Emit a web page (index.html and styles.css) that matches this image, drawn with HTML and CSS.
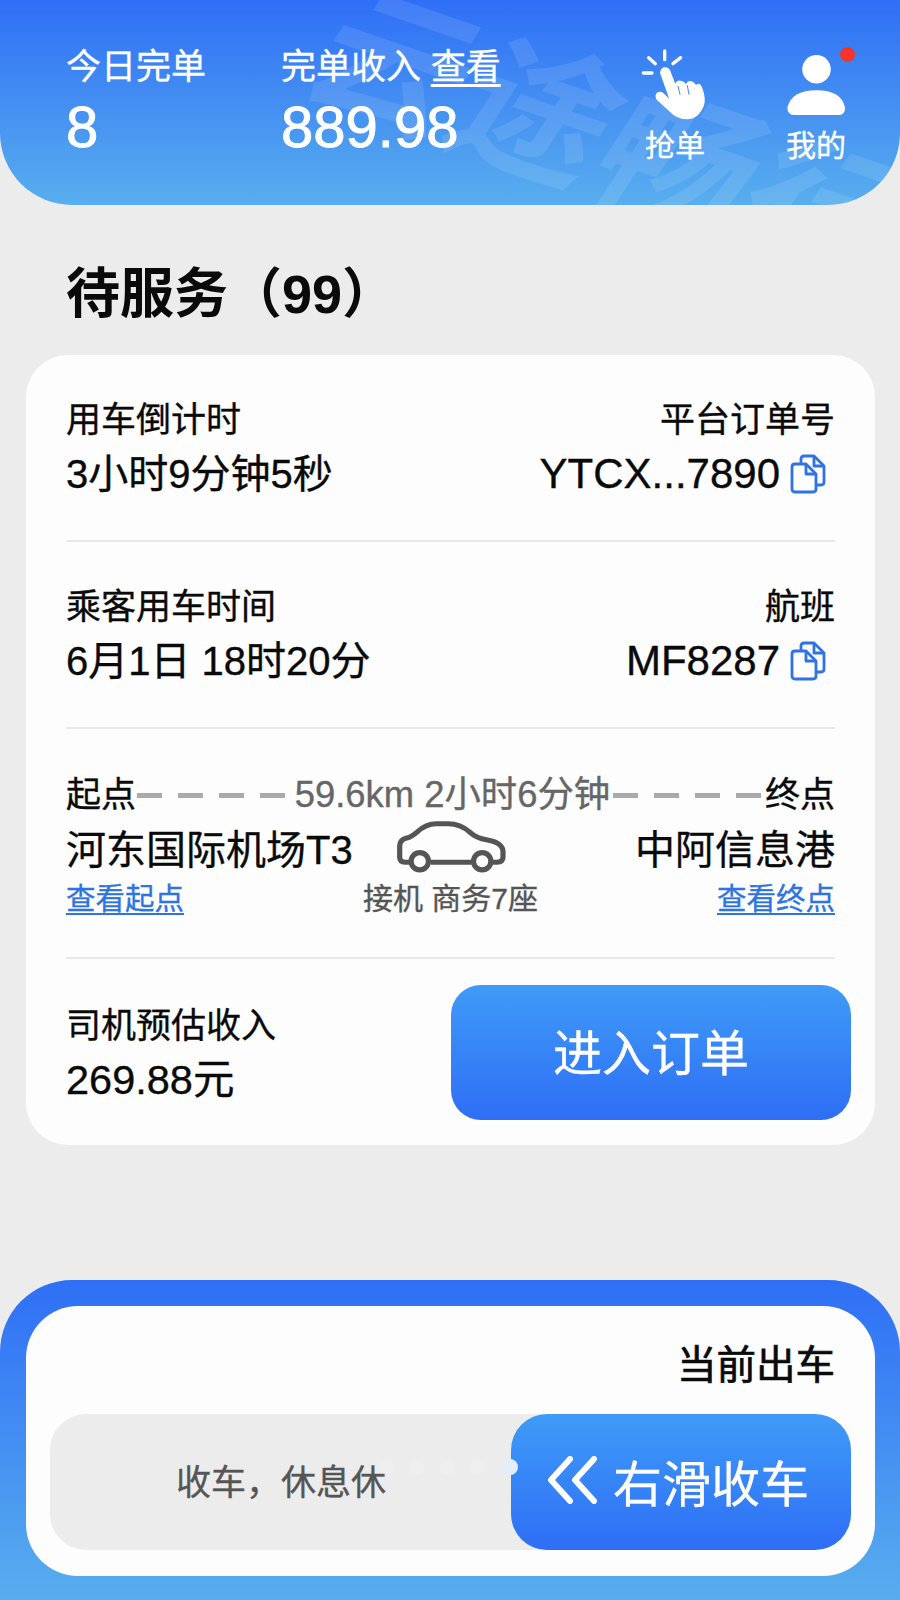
FILE: index.html
```html
<!DOCTYPE html>
<html lang="zh-CN">
<head>
<meta charset="UTF-8">
<title>待服务</title>
<link rel="stylesheet" href="styles.css">
</head>
<body>
<svg class="defs" width="0" height="0">
  <symbol id="copy" viewBox="0 0 36 40">
    <path d="M11 9V5Q11 2 14 2H24L34 12V28Q34 31 31 31H27"/>
    <path d="M24 3V12H33"/>
    <path d="M5 10H16L26 20V35Q26 38 23 38H5Q2 38 2 35V13Q2 10 5 10Z"/>
    <path d="M16 11V20H25"/>
  </symbol>
</svg>
<div class="page">
  <header class="header">
    <div class="watermark">云途畅行</div>
    <div class="stat stat-count">
      <div class="stat-label">今日完单</div>
      <div class="stat-value">8</div>
    </div>
    <div class="stat stat-income">
      <div class="stat-label">完单收入 <a class="stat-link">查看</a></div>
      <div class="stat-value">889.98</div>
    </div>
    <div class="header-btn btn-grab">
      <svg class="icon-hand" viewBox="60 50 210 225">
        <g class="rays">
          <path d="M76 128H102"/>
          <path d="M92 82L112 100"/>
          <path d="M140 62V88"/>
          <path d="M165 100L188 82"/>
        </g>
        <path class="palm" d="M126 128Q128 108 145 111Q156 114 160 130L172 160Q178 146 192 152Q200 154 204 162Q210 148 224 154Q230 156 234 164Q246 152 254 176Q264 205 258 225Q242 268 205 267Q175 266 153 242L116 208Q108 196 118 186Q128 182 136 188L154 206Z"/>
        <path class="creases" d="M180 168L186 192M208 166L213 192"/>
      </svg>
      <span>抢单</span>
    </div>
    <div class="header-btn btn-mine">
      <svg class="icon-user" viewBox="490 68 190 190">
        <circle cx="585" cy="117" r="43"/>
        <path d="M497 232Q510 180 585 180Q660 180 671 232Q672 255 650 255H520Q497 255 497 232Z"/>
      </svg>
      <span>我的</span>
      <i class="red-dot"></i>
    </div>
  </header>

  <h1 class="title">待服务（99）</h1>

  <section class="card">
    <div class="row">
      <div class="col">
        <div class="label">用车倒计时</div>
        <div class="value">3小时9分钟5秒</div>
      </div>
      <div class="col col-right">
        <div class="label">平台订单号</div>
        <div class="value value-code">YTCX...7890<svg class="icon-copy"><use href="#copy"/></svg></div>
      </div>
    </div>
    <div class="row">
      <div class="col">
        <div class="label">乘客用车时间</div>
        <div class="value">6月1日 18时20分</div>
      </div>
      <div class="col col-right">
        <div class="label">航班</div>
        <div class="value value-code">MF8287<svg class="icon-copy"><use href="#copy"/></svg></div>
      </div>
    </div>
    <div class="row row-route">
      <div class="route-top">
        <span class="label">起点</span>
        <i class="dash"></i>
        <span class="route-info">59.6km 2小时6分钟</span>
        <i class="dash"></i>
        <span class="label">终点</span>
      </div>
      <div class="route-main">
        <div class="col">
          <div class="value">河东国际机场T3</div>
          <a class="link">查看起点</a>
        </div>
        <div class="route-car">
          <svg class="icon-car" viewBox="48 36 320 150">
            <path d="M88 155H76Q60 155 60 140V108Q60 90 80 85Q94 82 110 68Q136 44 165 44H200Q235 44 262 68Q282 86 310 90Q358 98 358 125V140Q358 155 340 155H328M150 155H268"/>
            <circle cx="118" cy="152" r="25"/>
            <circle cx="298" cy="152" r="25"/>
          </svg>
          <div class="car-type">接机 商务7座</div>
        </div>
        <div class="col col-right">
          <div class="value">中阿信息港</div>
          <a class="link">查看终点</a>
        </div>
      </div>
    </div>
    <div class="row row-last">
      <div class="col">
        <div class="label">司机预估收入</div>
        <div class="value value-money">269.88元</div>
      </div>
      <button class="enter-btn">进入订单</button>
    </div>
  </section>

  <footer class="panel">
    <div class="panel-card">
      <div class="panel-title">当前出车</div>
      <div class="slider">
        <span class="slider-text">收车，休息休</span>
        <div class="slider-dots"><i></i><i></i><i></i><i></i><i></i></div>
        <div class="slider-thumb">
          <svg class="icon-chevrons" viewBox="0 0 52 48">
            <path d="M23 3L4 24L23 45M47 3L28 24L47 45"/>
          </svg>
          <span>右滑收车</span>
        </div>
      </div>
    </div>
  </footer>
</div>
</body>
</html>
```

FILE: styles.css
```css
* {
  margin: 0;
  padding: 0;
  box-sizing: border-box;
}

body {
  background-color: #ececec;
  color: #0a0a0a;
  font-family: "Liberation Sans", "Noto Sans CJK SC", sans-serif;
  -webkit-text-stroke: 0.35px currentColor;
}

.defs {
  position: absolute;
}

.page {
  display: flex;
  flex-direction: column;
  height: 1600px;
  overflow: hidden;
}

/* top blue bar */
.header {
  position: relative;
  display: flex;
  flex-shrink: 0;
  height: 205px;
  padding: 46px 0 0 66px;
  color: #fff;
  background: linear-gradient(180deg, #2f6ff6 0%, #58aeee 100%);
  border-radius: 0 0 72px 72px;
  overflow: hidden;
}

.watermark {
  position: absolute;
  top: -22px;
  left: 366px;
  width: 660px;
  color: rgba(255, 255, 255, 0.1);
  font-size: 150px;
  font-weight: bold;
  line-height: 150px;
  white-space: nowrap;
  -webkit-text-stroke: 0;
  transform: rotate(19deg) skewX(-14deg);
  transform-origin: left top;
}

.stat {
  position: relative;
}

.stat-count {
  width: 215px;
}

.stat-income {
  width: 364px;
}

.stat-label {
  font-size: 35px;
  line-height: 42px;
}

.stat-link {
  text-decoration: underline;
  text-underline-offset: 5px;
}

.stat-value {
  margin-top: 7px;
  font-size: 58px;
  line-height: 64px;
  -webkit-text-stroke: 0.9px currentColor;
}

.header-btn {
  position: relative;
  display: flex;
  flex-direction: column;
  align-items: center;
  width: 60px;
  margin-top: 5px;
  font-size: 30px;
  line-height: 36px;
}

.header-btn span {
  white-space: nowrap;
}

.btn-mine {
  margin-left: 81px;
}

.icon-hand {
  width: 70px;
  height: 75px;
  margin: -4px 0 6px -4px;
}

.rays path {
  fill: none;
  stroke: #fff;
  stroke-width: 10;
  stroke-linecap: round;
}

.palm {
  fill: #fff;
}

.creases {
  fill: none;
  stroke: #3f88ee;
  stroke-width: 3;
  stroke-linecap: round;
}

.icon-user {
  width: 63px;
  height: 63px;
  margin: 2px 0 12px;
  fill: #fff;
}

.red-dot {
  position: absolute;
  top: -4px;
  right: -9px;
  width: 15px;
  height: 15px;
  border-radius: 50%;
  background-color: #f5352b;
}

.title {
  margin: 58px 0 0 66px;
  font-size: 54px;
  line-height: 62px;
  font-weight: bold;
  -webkit-text-stroke: 0;
}

/* order card */
.card {
  flex-shrink: 0;
  margin: 30px 25px 0 26px;
  padding: 0 40px 25px;
  background-color: #fdfdfd;
  border-radius: 42px;
}

.row {
  display: flex;
  justify-content: space-between;
  padding: 43px 0 44px;
  border-bottom: 2px solid #e8e8e8;
}

.col {
  display: flex;
  flex-direction: column;
}

.col-right {
  align-items: flex-end;
}

.label {
  font-size: 35px;
  line-height: 44px;
}

.value {
  display: flex;
  align-items: center;
  margin-top: 10px;
  font-size: 40px;
  line-height: 44px;
  white-space: pre;
}

.value-code {
  font-size: 42px;
}

.icon-copy {
  width: 36px;
  height: 40px;
  margin: 0 9px 0 10px;
  fill: none;
  stroke: #2f72e4;
  stroke-width: 2.8;
  stroke-linejoin: round;
}

.row-route {
  display: block;
  padding: 44px 0 36px;
}

.route-top {
  display: flex;
  align-items: center;
  height: 44px;
}

.dash {
  flex: 1;
  height: 5px;
  margin-left: 1px;
  background: repeating-linear-gradient(90deg, #aaa 0 25px, transparent 25px 41px);
}

.route-info {
  margin: 0 2px 0 6px;
  color: #666;
  font-size: 36.4px;
  line-height: 44px;
  white-space: nowrap;
}

.route-main {
  display: grid;
  grid-template-columns: 1fr auto 1fr;
}

.route-main .value {
  margin-top: 11px;
}

.link {
  margin-top: 5px;
  color: #2d74e0;
  font-size: 29.5px;
  line-height: 44px;
  text-decoration: underline;
  text-underline-offset: 4px;
}

.route-car {
  display: flex;
  flex-direction: column;
  align-items: center;
}

.icon-car {
  width: 112px;
  height: 52px;
  margin: 4px 0 4px;
  fill: none;
  stroke: #555;
  stroke-width: 15;
  stroke-linejoin: round;
}

.car-type {
  color: #555;
  font-size: 30px;
  line-height: 44px;
  white-space: pre;
}

.row-last {
  align-items: center;
  padding: 26px 0 0;
  border-bottom: 0;
}

.value-money {
  margin-top: 10px;
  font-size: 41.5px;
}

.enter-btn {
  width: 400px;
  height: 135px;
  margin-right: -16px;
  padding-bottom: 6px;
  border: 0;
  border-radius: 30px;
  color: #fff;
  font-family: inherit;
  font-size: 49px;
  background: linear-gradient(180deg, #3f9bf8 0%, #2e6ef5 100%);
}

/* bottom swipe panel */
.panel {
  flex: 1;
  margin-top: 135px;
  padding: 26px 25px 26px 26px;
  background: linear-gradient(180deg, #2f6ff6 0%, #58aeee 100%);
  border-radius: 72px 72px 0 0;
}

.panel-card {
  height: 270px;
  padding: 36px 24px 0;
  background-color: #fdfdfd;
  border-radius: 52px;
}

.panel-title {
  margin-right: 16px;
  font-size: 39.5px;
  line-height: 46px;
  text-align: right;
  -webkit-text-stroke: 0.7px currentColor;
}

.slider {
  position: relative;
  display: flex;
  justify-content: space-between;
  align-items: center;
  height: 136px;
  margin-top: 26px;
  background-color: #ececec;
  border-radius: 36px;
}

.slider-text {
  margin: 0 0 6px 126px;
  color: #555;
  font-size: 35px;
}

.slider-dots {
  position: absolute;
  top: 45px;
  left: 330px;
  z-index: 1;
  display: flex;
  align-items: center;
  gap: 16px;
}

.slider-dots i {
  width: 14px;
  height: 14px;
  border-radius: 50%;
  background-color: rgba(255, 255, 255, 0.2);
  filter: blur(2px);
}

.slider-dots i:last-child {
  width: 16px;
  height: 16px;
  margin-left: 2px;
  background-color: #e4eefb;
  filter: none;
}

.slider-thumb {
  display: flex;
  align-items: center;
  width: 340px;
  height: 136px;
  padding: 0 0 4px 36px;
  color: #fff;
  font-size: 49px;
  background: linear-gradient(180deg, #3f9bf8 0%, #2e6ef5 100%);
  border-radius: 36px;
}

.icon-chevrons {
  width: 52px;
  height: 48px;
  margin-right: 14px;
  fill: none;
  stroke: #fff;
  stroke-width: 6;
  stroke-linecap: round;
  stroke-linejoin: round;
}
```
